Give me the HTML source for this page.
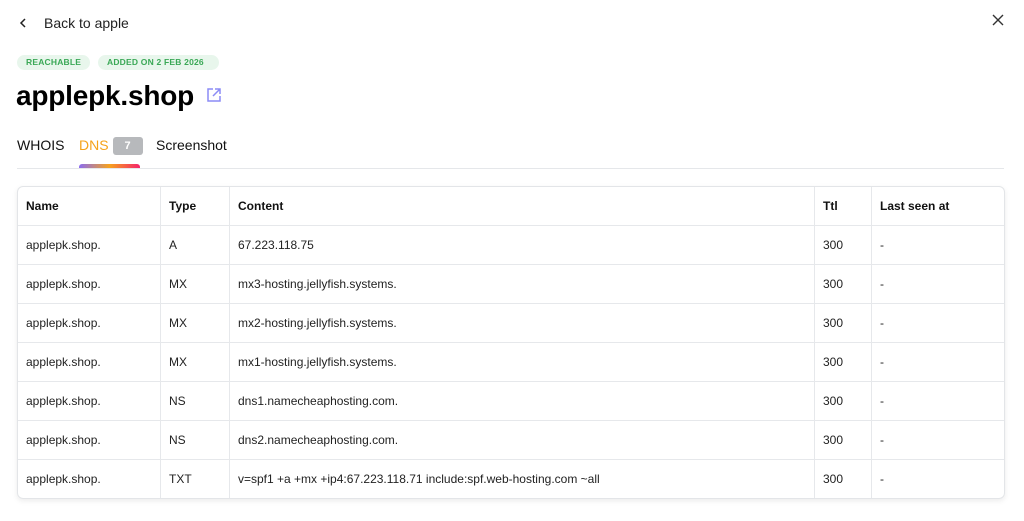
<!DOCTYPE html>
<html><head><style>
body{margin:0;width:1024px;height:521px;background:#fff;font-family:"Liberation Sans",sans-serif;color:#111;position:relative;overflow:hidden}
.back{position:absolute;left:19px;top:15px;font-size:14px;color:#222}
.back span{margin-left:17px}
.x{position:absolute;right:19px;top:13px}
.badge{position:absolute;top:55px;height:15px;line-height:15px;border-radius:8px;background:#e8f6ec;color:#3aa856;font-size:8.5px;font-weight:bold;padding:0 9px;letter-spacing:.2px}
h1{position:absolute;left:16px;top:80px;margin:0;font-size:28px;font-weight:bold;letter-spacing:-.2px;color:#000}
.ext{position:absolute;left:206px;top:87px}
.tabs{position:absolute;left:17px;top:137px;font-size:14px}
.tab{position:absolute;white-space:nowrap}
.cnt{display:inline-block;background:#b7b9bc;color:#fff;font-size:11px;font-weight:bold;width:30px;height:18px;line-height:18px;text-align:center;border-radius:3px;margin-left:4px;vertical-align:1px}
.line{position:absolute;left:17px;top:168px;width:987px;height:1px;background:#e5e7ea}
.ul{position:absolute;left:79px;top:164px;width:61px;height:4px;border-radius:3px 3px 0 0;background:linear-gradient(90deg,#8a6cf0,#f6a21e,#f5236b)}
table{position:absolute;left:17px;top:186px;width:988px;border-collapse:separate;border-spacing:0;border:1px solid #e3e5e8;border-radius:6px;box-shadow:0 2px 6px rgba(0,0,0,.08);font-size:12px}
td,th{height:38px;padding:0 8px;border-bottom:1px solid #e6e8eb;border-right:1px solid #e6e8eb;text-align:left;color:#222}
th{font-weight:bold;color:#111}
tr:last-child td{border-bottom:none}
td:last-child,th:last-child{border-right:none}
</style></head><body>
<div class="back"><svg width="8" height="10" viewBox="0 0 8 10"><path d="M6 1L2 5l4 4" stroke="#222" stroke-width="1.5" fill="none"/></svg><span>Back to apple</span></div>
<svg class="x" width="14" height="14" viewBox="0 0 14 14"><path d="M2 2l10 10M12 2L2 12" stroke="#333" stroke-width="1.4"/></svg>
<div class="badge" style="left:17px;width:55px">REACHABLE</div>
<div class="badge" style="left:98px;width:103px">ADDED ON 2 FEB 2026</div>
<h1>applepk.shop</h1>
<svg class="ext" width="16" height="16" viewBox="0 0 16 16"><path d="M7 2H2v12h12V9M9 2h5v5M14 2L7 9" stroke="#8c8cf5" stroke-width="1.5" fill="none"/></svg>
<div class="tabs">
<div class="tab" style="left:0;top:0">WHOIS</div>
<div class="tab" style="left:62px;top:0;color:#f5a31a">DNS<span class="cnt">7</span></div>
<div class="tab" style="left:139px;top:0">Screenshot</div>
</div>
<div class="line"></div><div class="ul"></div>
<table>
<colgroup><col style="width:143px"><col style="width:69px"><col style="width:585px"><col style="width:57px"><col></colgroup>
<tr><th>Name</th><th>Type</th><th>Content</th><th>Ttl</th><th>Last seen at</th></tr>
<tr><td>applepk.shop.</td><td>A</td><td>67.223.118.75</td><td>300</td><td>-</td></tr>
<tr><td>applepk.shop.</td><td>MX</td><td>mx3-hosting.jellyfish.systems.</td><td>300</td><td>-</td></tr>
<tr><td>applepk.shop.</td><td>MX</td><td>mx2-hosting.jellyfish.systems.</td><td>300</td><td>-</td></tr>
<tr><td>applepk.shop.</td><td>MX</td><td>mx1-hosting.jellyfish.systems.</td><td>300</td><td>-</td></tr>
<tr><td>applepk.shop.</td><td>NS</td><td>dns1.namecheaphosting.com.</td><td>300</td><td>-</td></tr>
<tr><td>applepk.shop.</td><td>NS</td><td>dns2.namecheaphosting.com.</td><td>300</td><td>-</td></tr>
<tr><td>applepk.shop.</td><td>TXT</td><td>v=spf1 +a +mx +ip4:67.223.118.71 include:spf.web-hosting.com ~all</td><td>300</td><td>-</td></tr>
</table>
</body></html>
